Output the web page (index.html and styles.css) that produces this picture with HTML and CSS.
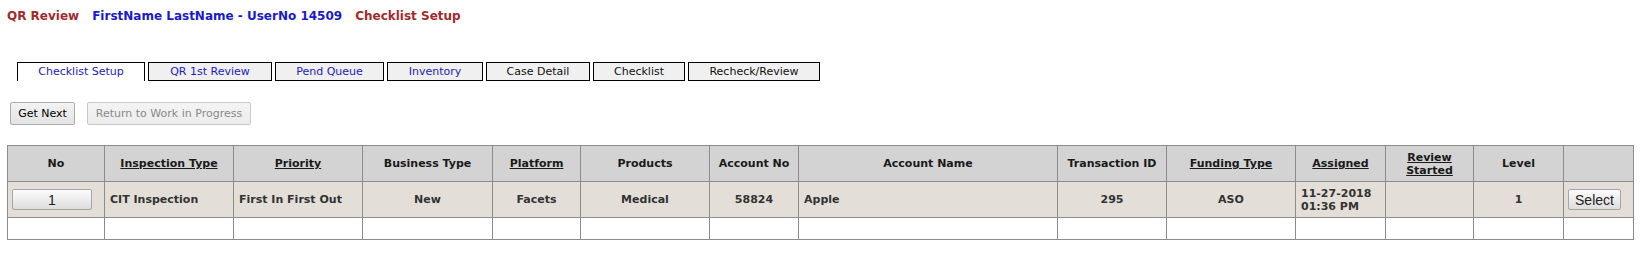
FILE: index.html
```html
<!DOCTYPE html>
<html>
<head>
<meta charset="utf-8">
<link rel="stylesheet" href="styles.css">
</head>
<body>
<div class="page">
  <div class="title">
    <span class="t-red">QR Review</span>
    <span class="t-blue">FirstName LastName - UserNo 14509</span>
    <span class="t-red">Checklist Setup</span>
  </div>

  <div class="tabs">
    <div class="tab active w1">Checklist Setup</div>
    <div class="tab link w2">QR 1st Review</div>
    <div class="tab link w3">Pend Queue</div>
    <div class="tab link w4">Inventory</div>
    <div class="tab w5">Case Detail</div>
    <div class="tab w6">Checklist</div>
    <div class="tab w7">Recheck/Review</div>
  </div>

  <div class="actions">
    <button class="btn btn-next">Get Next</button>
    <button class="btn btn-return" disabled>Return to Work in Progress</button>
  </div>

  <table class="grid">
    <colgroup>
      <col style="width:97px"><col style="width:129px"><col style="width:129px"><col style="width:130px">
      <col style="width:88px"><col style="width:129px"><col style="width:89px"><col style="width:259px">
      <col style="width:109px"><col style="width:129px"><col style="width:90px"><col style="width:88px">
      <col style="width:90px"><col style="width:70px">
    </colgroup>
    <thead>
      <tr class="hrow">
        <th>No</th>
        <th><u>Inspection Type</u></th>
        <th><u>Priority</u></th>
        <th>Business Type</th>
        <th><u>Platform</u></th>
        <th>Products</th>
        <th>Account No</th>
        <th>Account Name</th>
        <th>Transaction ID</th>
        <th><u>Funding Type</u></th>
        <th><u>Assigned</u></th>
        <th><u>Review Started</u></th>
        <th>Level</th>
        <th></th>
      </tr>
    </thead>
    <tbody>
      <tr class="drow">
        <td class="btncell"><button class="gbtn gbtn-no">1</button></td>
        <td class="l">CIT Inspection</td>
        <td class="l">First In First Out</td>
        <td>New</td>
        <td>Facets</td>
        <td>Medical</td>
        <td>58824</td>
        <td class="l">Apple</td>
        <td>295</td>
        <td>ASO</td>
        <td class="l">11-27-2018 01:36 PM</td>
        <td></td>
        <td>1</td>
        <td class="btncell"><button class="gbtn gbtn-sel">Select</button></td>
      </tr>
      <tr class="erow">
        <td></td><td></td><td></td><td></td><td></td><td></td><td></td>
        <td></td><td></td><td></td><td></td><td></td><td></td><td></td>
      </tr>
    </tbody>
  </table>
</div>
</body>
</html>
```

FILE: styles.css
```css
html, body {
  margin: 0;
  padding: 0;
  background: #ffffff;
}

.page {
  padding: 8px 0 0 7px;
  font-family: "DejaVu Sans", Verdana, sans-serif;
}

.title {
  font-weight: bold;
  font-size: 12px;
  line-height: 16px;
  height: 16px;
  display: flex;
  align-items: baseline;
  gap: 13px;
  white-space: nowrap;
}

.t-red { color: #a52a2a; }
.t-blue { color: #1a1acd; }

.tabs {
  display: flex;
  gap: 3px;
  margin: 38px 0 0 10px;
}

.tab {
  box-sizing: border-box;
  height: 19px;
  line-height: 17px;
  font-size: 11px;
  text-align: center;
  border: 1px solid #000;
  background: #f0f0f0;
  color: #111;
  white-space: nowrap;
}

.tab.link { color: #1a1acd; }

.tab.active {
  background: #ffffff;
  color: #1a1acd;
  border-bottom: none;
}

.w1 { width: 128px; }
.w2 { width: 124px; }
.w3 { width: 109px; }
.w4 { width: 96px; }
.w5 { width: 104px; }
.w6 { width: 92px; }
.w7 { width: 132px; }

.actions {
  display: flex;
  gap: 12px;
  margin: 21px 0 0 3px;
}

.btn {
  box-sizing: border-box;
  height: 23px;
  padding: 0;
  font-family: "DejaVu Sans", Verdana, sans-serif;
  font-size: 11px;
  color: #000;
  background: linear-gradient(#f3f3f3, #e3e3e3);
  border: 1px solid #acacac;
  border-radius: 2px;
}

.btn-next { width: 65px; }
.btn-return {
  width: 164px;
  color: #8a8a8a;
  border-color: #c9c9c9;
  background: linear-gradient(#f4f4f4, #ececec);
}

.grid {
  margin-top: 20px;
  border-collapse: collapse;
  table-layout: fixed;
  width: 1626px;
  font-size: 11px;
}

.grid th, .grid td {
  border: 1px solid #8c8c8c;
  padding: 0 4px;
  text-align: center;
  vertical-align: middle;
  font-weight: bold;
  line-height: 13px;
}

.grid th {
  color: #1a1a1a;
}

.grid td {
  color: #333;
}

.hrow {
  height: 36px;
  background: #d3d3d3;
}

.drow {
  height: 36px;
  background: #e3dfd8;
}

.erow {
  height: 22px;
  background: #fff;
}

.grid td.l {
  text-align: left;
  padding-left: 5px;
}

.grid td.btncell {
  text-align: left;
  padding: 0 0 0 4px;
}

.gbtn {
  box-sizing: border-box;
  height: 21px;
  padding: 0;
  font-family: "Liberation Sans", Arial, sans-serif;
  font-size: 14px;
  color: #222;
  background: linear-gradient(#fcfcfc, #dddddd);
  border: 1px solid #a6a6a6;
  border-radius: 2px;
  vertical-align: middle;
}

.gbtn-no { width: 80px; }
.gbtn-sel { width: 53px; }
```
